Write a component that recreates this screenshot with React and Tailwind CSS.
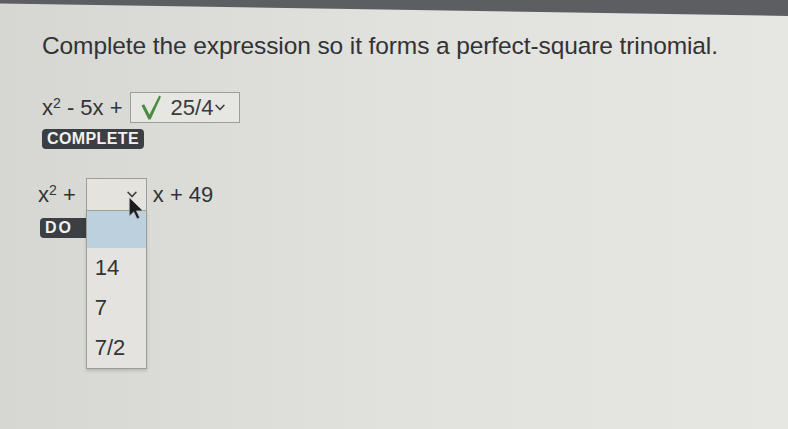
import { useState } from 'react';

const OPTIONS = ['', '14', '7', '7/2'];

function Chevron({ className = '' }) {
  return (
    <svg viewBox="0 0 10 7" className={className} fill="none" stroke="currentColor" strokeWidth="1.8" strokeLinecap="round" strokeLinejoin="round">
      <path d="M1.2 1.5l3.8 4 3.8-4" />
    </svg>
  );
}

function Pointer() {
  return (
    <svg viewBox="0 0 12 19" className="w-[15px] h-[24px]">
      <path d="M1 1v15l3.6-3.4 2.6 5.6 2.2-1-2.6-5.4H12z" fill="#1d1d1f" stroke="#cfcfcf" strokeWidth="0.5" />
    </svg>
  );
}

function Check() {
  return (
    <svg viewBox="0 0 20 25" className="w-[20px] h-[25px]">
      <path d="M0.5 10.5l2.6-1.2 5.4 10.2L18.2 0.6l1.8 1.1L9.6 24.4H7.4z" fill="#4a8d42" />
    </svg>
  );
}

function Badge({ children, className = '' }) {
  return (
    <span
      className={`inline-block bg-[#3b3e42] text-[#f1f1f1] font-bold text-[16px] leading-[20px] pl-[5px] rounded-[4px] ${className}`}
    >
      {children}
    </span>
  );
}

export default function App() {
  const [open] = useState(true);
  const [hover] = useState(0);

  return (
    <div className="relative w-[788px] h-[429px] overflow-hidden bg-gradient-to-r from-[#d6d6d2] via-[#e1e1dd] to-[#e6e6e2] font-['Liberation_Sans',Arial,sans-serif] text-[#323335]">
      {/* monitor bezel edge */}
      <div className="h-[16px] bg-[#5d5e62] [clip-path:polygon(0_0,100%_0,100%_100%,0_22%)]" />

      <div className="pl-[42px] pt-[16px]">
        <h1 className="text-[24.5px] leading-[28px] tracking-[-0.1px]">
          Complete the expression so it forms a perfect-square trinomial.
        </h1>

        {/* answered question */}
        <div className="mt-[32px] flex items-center text-[22px] leading-[24px]">
          <span>
            x<sup className="text-[14px]">2</sup> - 5x +
          </span>
          <div className="ml-[7px] h-[31px] w-[110px] border border-[#9d9d9a] bg-[#e6e6e2] flex items-center pl-[10px]">
            <Check />
            <span className="ml-[10px] text-[#3b3b3b]">25/4</span>
            <Chevron className="ml-[2px] w-[10px] h-[7px] text-[#444]" />
          </div>
        </div>

        <div className="mt-[6px] leading-none">
          <Badge className="pr-[5px] tracking-[0.4px]">COMPLETE</Badge>
        </div>

        {/* question with open dropdown */}
        <div className="mt-[29px] -ml-[4px] flex items-center text-[22px] leading-[24px]">
          <span>
            x<sup className="text-[14px]">2</sup> +
          </span>
          <div className="relative ml-[10px]">
            <div className="h-[33px] w-[61px] border border-[#9d9d9a] bg-[#e5e3de] flex items-center justify-end pr-[9px]">
              <Chevron className="w-[10px] h-[7px] text-[#444]" />
            </div>
            {open && (
              <ul className="absolute left-0 top-[32px] w-[61px] border border-[#9d9d9a] bg-[#e4e3df] shadow-[0_2px_3px_rgba(0,0,0,0.15)] z-10">
                {OPTIONS.map((opt, i) => (
                  <li
                    key={i}
                    className={`pl-[8px] flex items-center ${i === 0 ? 'h-[37px]' : 'h-[40px]'} ${
                      i === hover ? 'bg-[#bcd0de]' : ''
                    }`}
                  >
                    {opt}
                  </li>
                ))}
              </ul>
            )}
            <div className="absolute left-[42px] top-[18px] z-20">
              <Pointer />
            </div>
          </div>
          <span className="ml-[6px]">x + 49</span>
        </div>

        <div className="mt-[7px] -ml-[2px] leading-none">
          <Badge className="pr-[20px] tracking-[2px]">DO</Badge>
        </div>
      </div>
    </div>
  );
}
